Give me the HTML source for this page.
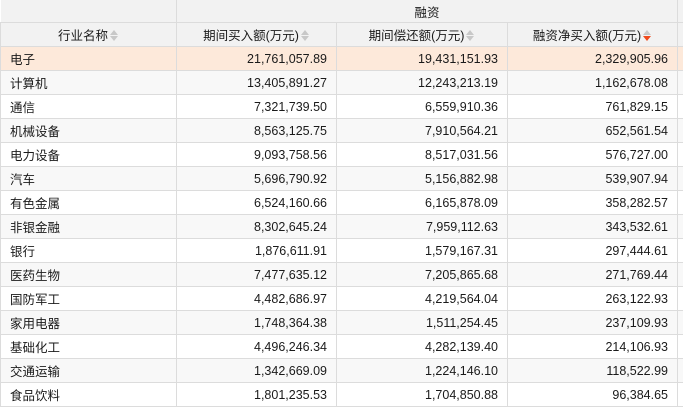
<!DOCTYPE html>
<html><head><meta charset="utf-8"><style>
*{margin:0;padding:0;box-sizing:border-box}
body{width:683px;height:409px;overflow:hidden;background:#fff;font-family:"Liberation Sans","Noto Sans CJK SC",sans-serif;font-size:12.5px;color:#1a1a1a}
table{border-collapse:collapse;table-layout:fixed;width:690px}
td,th{border:1px solid #dcdcdc;height:24px;padding:0 9px;white-space:nowrap;overflow:hidden}
th{background:#f2f2f2;font-weight:normal;text-align:center;height:24px}
tr.top th{height:23px}
td{text-align:right}
td:first-child{text-align:left;padding-left:9px}
tbody tr:nth-child(even) td{background:#f8f8f8}
tbody tr.hl td{background:#fde9da}
.s{display:inline-block;width:9px;height:12px;vertical-align:-2px;margin-left:2px;position:relative}
.s:before,.s:after{content:"";position:absolute;left:0;border-left:4.5px solid transparent;border-right:4.5px solid transparent}
.s:before{top:0;border-bottom:5px solid #c8c8c8}
.s:after{top:6px;border-top:5px solid #c8c8c8}
.s.d:after{border-top-color:#f04a1c}
</style></head><body>
<table style="margin-top:-1px">
<colgroup><col style="width:176px"><col style="width:160px"><col style="width:171px"><col style="width:170px"><col style="width:13px"></colgroup>
<thead>
<tr class="top"><th style="border-left:none"></th><th colspan="3">融资</th><th></th></tr>
<tr><th>行业名称<span class="s"></span></th><th>期间买入额(万元)<span class="s"></span></th><th>期间偿还额(万元)<span class="s"></span></th><th>融资净买入额(万元)<span class="s d"></span></th><th></th></tr>
</thead>
<tbody>
<tr class="hl"><td>电子</td><td>21,761,057.89</td><td>19,431,151.93</td><td>2,329,905.96</td><td></td></tr>
<tr><td>计算机</td><td>13,405,891.27</td><td>12,243,213.19</td><td>1,162,678.08</td><td></td></tr>
<tr><td>通信</td><td>7,321,739.50</td><td>6,559,910.36</td><td>761,829.15</td><td></td></tr>
<tr><td>机械设备</td><td>8,563,125.75</td><td>7,910,564.21</td><td>652,561.54</td><td></td></tr>
<tr><td>电力设备</td><td>9,093,758.56</td><td>8,517,031.56</td><td>576,727.00</td><td></td></tr>
<tr><td>汽车</td><td>5,696,790.92</td><td>5,156,882.98</td><td>539,907.94</td><td></td></tr>
<tr><td>有色金属</td><td>6,524,160.66</td><td>6,165,878.09</td><td>358,282.57</td><td></td></tr>
<tr><td>非银金融</td><td>8,302,645.24</td><td>7,959,112.63</td><td>343,532.61</td><td></td></tr>
<tr><td>银行</td><td>1,876,611.91</td><td>1,579,167.31</td><td>297,444.61</td><td></td></tr>
<tr><td>医药生物</td><td>7,477,635.12</td><td>7,205,865.68</td><td>271,769.44</td><td></td></tr>
<tr><td>国防军工</td><td>4,482,686.97</td><td>4,219,564.04</td><td>263,122.93</td><td></td></tr>
<tr><td>家用电器</td><td>1,748,364.38</td><td>1,511,254.45</td><td>237,109.93</td><td></td></tr>
<tr><td>基础化工</td><td>4,496,246.34</td><td>4,282,139.40</td><td>214,106.93</td><td></td></tr>
<tr><td>交通运输</td><td>1,342,669.09</td><td>1,224,146.10</td><td>118,522.99</td><td></td></tr>
<tr><td>食品饮料</td><td>1,801,235.53</td><td>1,704,850.88</td><td>96,384.65</td><td></td></tr>
</tbody></table>
</body></html>
